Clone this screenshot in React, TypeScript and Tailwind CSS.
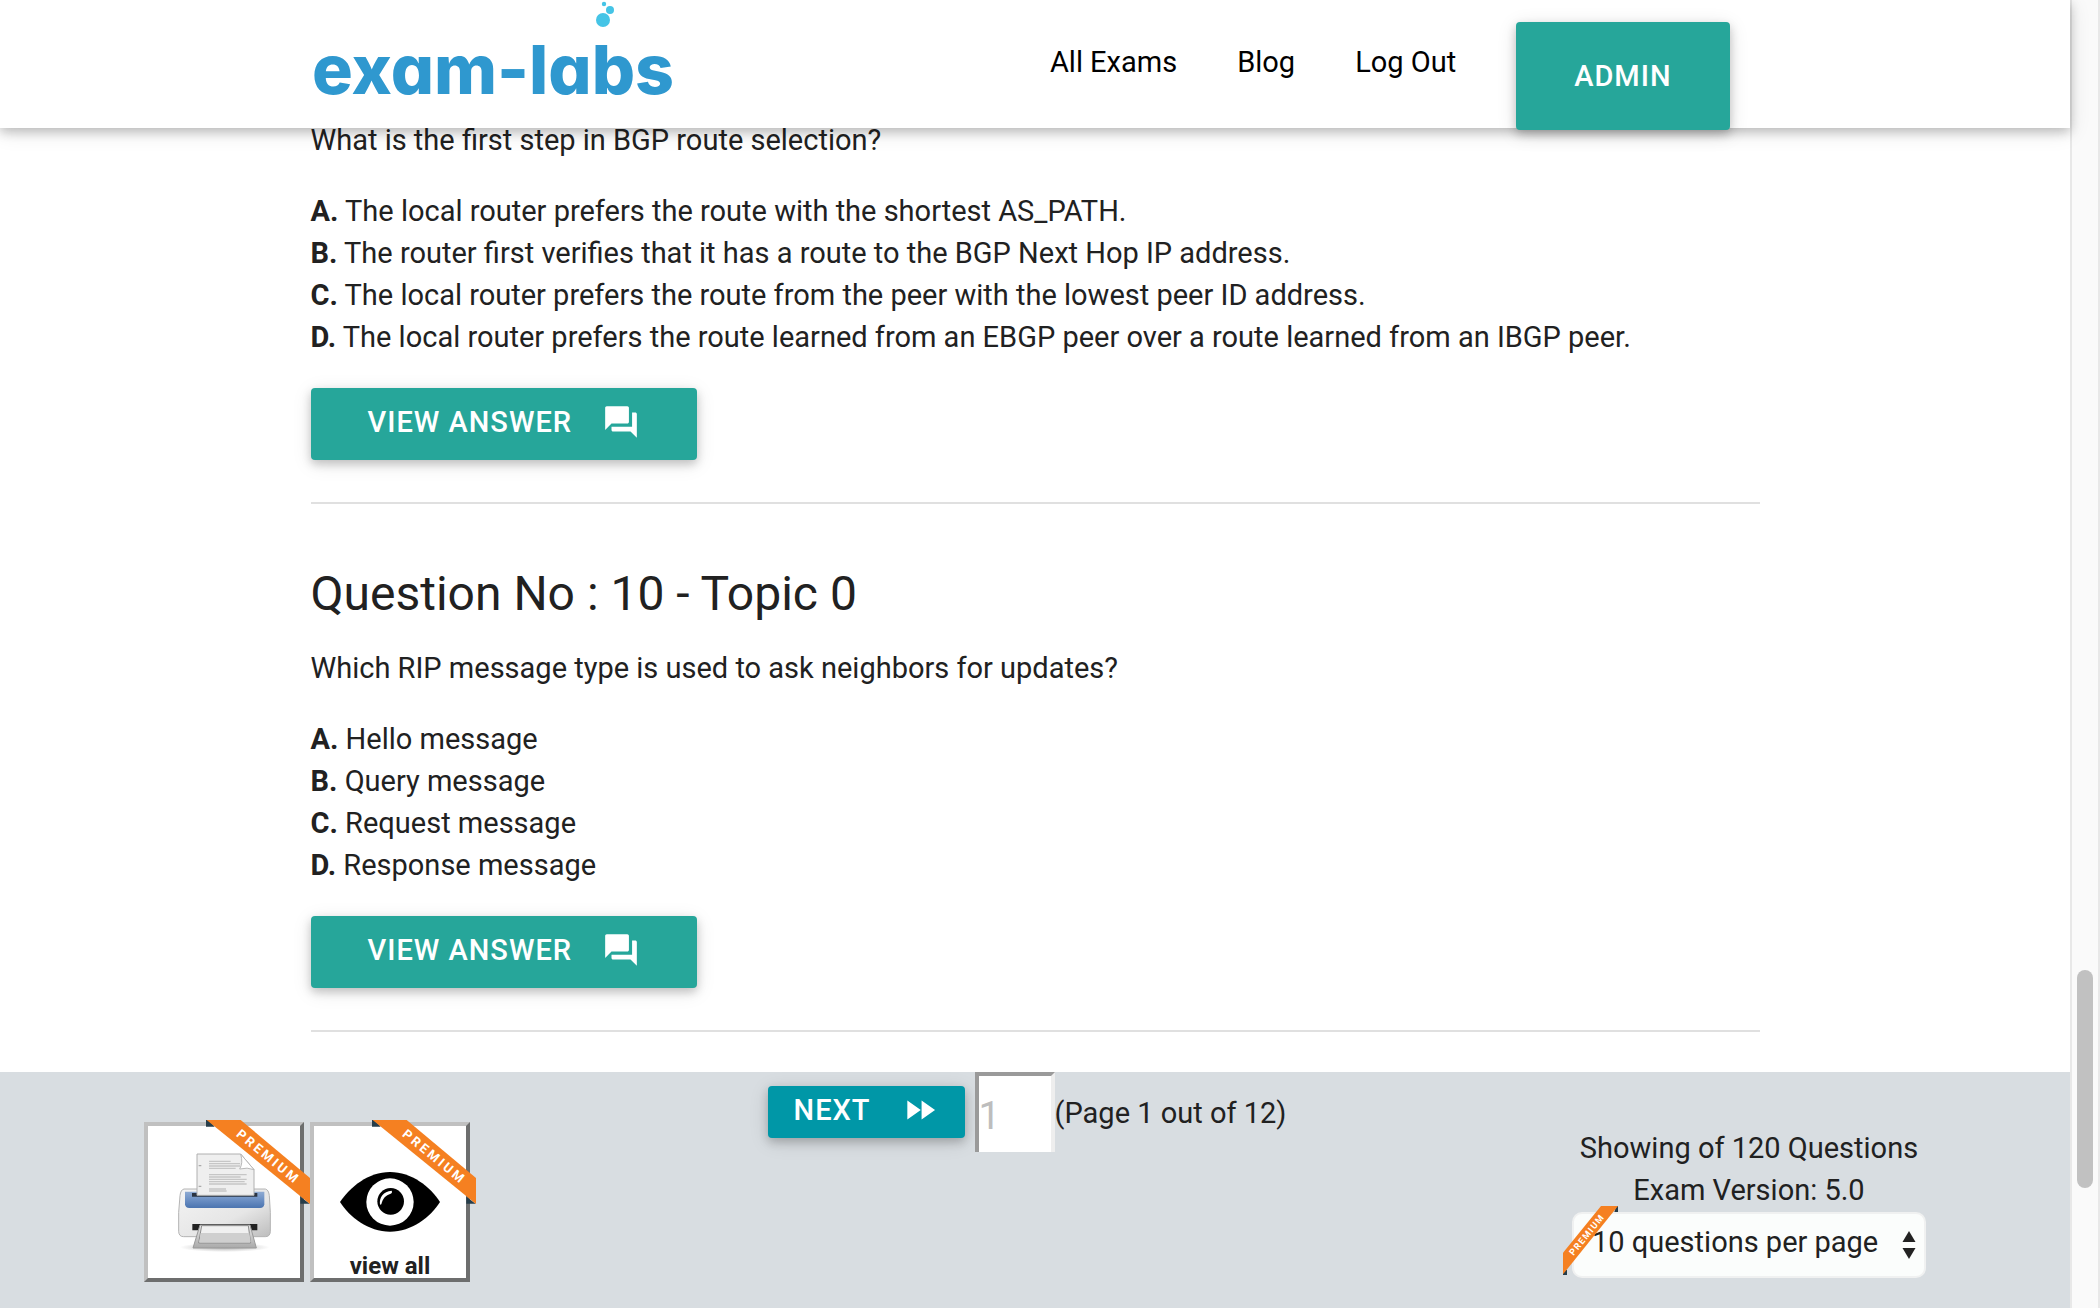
import { MdFastForward, MdForum } from "react-icons/md";

type Option = { letter: string; text: string };

const firstOptions: Option[] = [
  { letter: "A.", text: "The local router prefers the route with the shortest AS_PATH." },
  { letter: "B.", text: "The router first verifies that it has a route to the BGP Next Hop IP address." },
  { letter: "C.", text: "The local router prefers the route from the peer with the lowest peer ID address." },
  { letter: "D.", text: "The local router prefers the route learned from an EBGP peer over a route learned from an IBGP peer." },
];

const secondOptions: Option[] = [
  { letter: "A.", text: "Hello message" },
  { letter: "B.", text: "Query message" },
  { letter: "C.", text: "Request message" },
  { letter: "D.", text: "Response message" },
];

function Logo() {
  return (
    <a href="#home" aria-label="exam-labs" className="block h-[104px] w-[366px] shrink-0">
      <svg viewBox="0 0 366 104" className="h-full w-full overflow-visible">
        <text
          x="1"
          y="94"
          fill="#2f98cf"
          className="font-['Inter',sans-serif] text-[68px] font-extrabold [font-feature-settings:'cv11']"
        >
          exam-labs
        </text>
        <circle cx="292" cy="20" r="7" fill="#45c4e6" />
        <circle cx="299" cy="10" r="4" fill="#45c4e6" />
        <circle cx="293" cy="4" r="2.2" fill="#45c4e6" />
      </svg>
    </a>
  );
}

function Header() {
  return (
    <header className="relative z-10 h-32 shrink-0 bg-white shadow-[0_4px_10px_rgba(0,0,0,0.2),0_4px_20px_rgba(0,0,0,0.12)]">
      <div className="mx-auto flex w-[70%] items-start justify-between pr-[30px]">
        <Logo />
        <nav className="flex items-start gap-[60px] whitespace-nowrap text-black">
          <a href="#exams" className="mt-[41px]">All Exams</a>
          <a href="#blog" className="mt-[41px]">Blog</a>
          <a href="#logout" className="mt-[41px]">Log Out</a>
          <a
            href="#admin"
            className="mt-[22px] flex h-[108px] items-center rounded-[4px] bg-[#26a69a] px-[58px] font-medium tracking-[1px] text-white shadow-[0_4px_10px_rgba(0,0,0,0.2),0_4px_20px_rgba(0,0,0,0.12)]"
          >
            ADMIN
          </a>
        </nav>
      </div>
    </header>
  );
}

function Question({ title, prompt, options }: { title?: string; prompt: string; options: Option[] }) {
  return (
    <section className="border-b-2 border-[#e0e0e0] pb-[42px]">
      {title && <h2 className="mt-[63px] mb-[27px] text-[48px] leading-[53px]">{title}</h2>}
      <p>{prompt}</p>
      <ul className="mt-[29px] mb-[30px]">
        {options.map((o) => (
          <li key={o.letter}>
            <b className="font-bold">{o.letter}</b> {o.text}
          </li>
        ))}
      </ul>
      <button
        type="button"
        className="flex h-[72px] items-center gap-[30px] rounded-[4px] bg-[#26a69a] px-[57px] pb-1 font-medium tracking-[1px] text-white shadow-[0_4px_10px_rgba(0,0,0,0.2),0_4px_20px_rgba(0,0,0,0.1)]"
      >
        VIEW ANSWER
        <MdForum className="size-[38px]" />
      </button>
    </section>
  );
}

function Ribbon() {
  return (
    <svg viewBox="0 0 312 252" className="pointer-events-none absolute -top-[6px] -right-[10px] h-[84px] w-[104px]">
      <path d="M0 0V20H26L8 0Z" fill="#263d4a" />
      <path d="M283 230V251H311Z" fill="#263d4a" />
      <path d="M2 0H104L312 174V252Z" fill="#f58021" />
      <text
        transform="translate(187 110) rotate(39.5)"
        textAnchor="middle"
        dominantBaseline="central"
        fill="#fff"
        className="font-['Roboto',sans-serif] text-[39px] font-bold tracking-[8px]"
      >
        PREMIUM
      </text>
    </svg>
  );
}

function SmallRibbon() {
  return (
    <svg viewBox="0 0 165 207" className="pointer-events-none absolute -top-[6px] -left-[9px] h-[69px] w-[55px]">
      <path d="M165 0V18H154L160 0Z" fill="#263d4a" />
      <path d="M0 192H12V207H0Z" fill="#263d4a" />
      <path d="M114 0H165L0 205V140Z" fill="#f58021" />
      <text
        transform="translate(72 86) rotate(-51)"
        textAnchor="middle"
        dominantBaseline="central"
        fill="#fff"
        className="font-['Roboto',sans-serif] text-[27px] font-bold tracking-[4px]"
      >
        PREMIUM
      </text>
    </svg>
  );
}

function PrinterIcon() {
  return (
    <svg viewBox="172 156 279 306" className="h-[102px] w-[93px]">
      <defs>
        <linearGradient id="body" x1="0" y1="0" x2="1" y2="1">
          <stop offset="0" stopColor="#f4f4f4" />
          <stop offset="0.6" stopColor="#e6e6e6" />
          <stop offset="1" stopColor="#bdbdbd" />
        </linearGradient>
        <linearGradient id="blue" x1="0" y1="0" x2="0" y2="1">
          <stop offset="0" stopColor="#8fabd3" />
          <stop offset="0.5" stopColor="#6c90c4" />
          <stop offset="1" stopColor="#4b74b0" />
        </linearGradient>
        <linearGradient id="tray" x1="0" y1="0" x2="0" y2="1">
          <stop offset="0" stopColor="#e9e9e9" />
          <stop offset="1" stopColor="#a9a9a9" />
        </linearGradient>
        <radialGradient id="ground">
          <stop offset="0" stopColor="#777" stopOpacity="0.6" />
          <stop offset="1" stopColor="#777" stopOpacity="0" />
        </radialGradient>
      </defs>
      <ellipse cx="312" cy="445" rx="135" ry="14" fill="url(#ground)" />
      <path
        d="M190 270H434Q444 272 446 290L449 340V398Q448 413 434 413H189Q175 413 174 398V340L178 290Q180 272 190 270Z"
        fill="url(#body)"
        stroke="#b4b4b4"
        strokeWidth="3"
      />
      <path d="M193 278H431V316Q430 327 418 327H206Q194 327 193 316Z" fill="url(#blue)" />
      <path d="M214 282H410V293H214Z" fill="#2b3442" />
      <path d="M229 165H360L400 212V289H229Z" fill="#efefef" stroke="#b0b0b0" strokeWidth="3" />
      <path d="M360 165Q368 192 357 210Q380 204 400 212Z" fill="#fff" stroke="#b8b8b8" strokeWidth="3" />
      <path
        d="M265 187H330M265 194H358M265 201H358M265 208H345M265 227H378M265 234H360M265 241H378M265 248H372M265 255H378M265 270H316M265 276H318"
        stroke="#c6c6c6"
        strokeWidth="4"
      />
      <path d="M234 200H242M234 262H242" stroke="#aaa" strokeWidth="4" />
      <path d="M215 375H410V394H215Z" fill="#222" />
      <path d="M238 378H388L407 447H217Z" fill="url(#tray)" stroke="#999" strokeWidth="3" />
      <path d="M243 380H383L390 432H234Z" fill="#f0f0f0" stroke="#8b8b8b" strokeWidth="3" />
      <path d="M240 402H386L390 430H236Z" fill="#cfcfcf" />
    </svg>
  );
}

function EyeIcon() {
  return (
    <svg viewBox="0 0 300 180" className="h-[60px] w-[100px]">
      <path d="M0 90C30 45 85 0 150 0C215 0 272 45 300 90C272 135 215 179 150 179C85 179 28 135 0 90Z" fill="#000" />
      <circle cx="150" cy="90" r="71" fill="#fff" />
      <circle cx="152" cy="88" r="40" fill="#000" />
      <path d="M120 98C117 76 130 58 155 56C157 60 156 63 152 65C137 70 129 78 124 97Z" fill="#fff" />
    </svg>
  );
}

const tile =
  "relative size-40 border-4 border-t-[#c0c0c0] border-l-[#c0c0c0] border-r-[#6d6e6e] border-b-[#6d6e6e] bg-white";

function Footer() {
  return (
    <footer className="flex h-[236px] shrink-0 items-start justify-between bg-[#d8dde1] px-36 whitespace-nowrap">
      <div className="mt-[50px] flex gap-1.5">
        <button type="button" aria-label="Print" className={`${tile} flex items-center justify-center`}>
          <PrinterIcon />
          <Ribbon />
        </button>
        <button type="button" className={`${tile} flex flex-col items-center pt-[46px]`}>
          <EyeIcon />
          <span className="mt-[22px] text-[24px] leading-[24px] font-bold">view all</span>
          <Ribbon />
        </button>
      </div>

      <div className="flex items-start pl-3">
        <button
          type="button"
          className="mt-3.5 mr-2.5 flex h-[52px] items-center gap-[30px] rounded-[4px] bg-[#0097a7] px-[26px] pb-1 font-medium tracking-[1px] text-white shadow-[0_4px_10px_rgba(0,0,0,0.2),0_4px_20px_rgba(0,0,0,0.12)]"
        >
          NEXT
          <MdFastForward className="size-[38px]" />
        </button>
        <input
          aria-label="Page number"
          placeholder="1"
          className="h-20 w-20 border-4 border-b-0 border-t-[#9a9a9a] border-r-[#eeeeee] border-l-[#9a9a9a] bg-white pt-1 text-[39px] outline-none placeholder:text-[#bdbdbd]"
        />
        <span className="mt-5">(Page 1 out of 12)</span>
      </div>

      <div className="mt-[55px] flex flex-col items-center">
        <p>Showing of 120 Questions</p>
        <p>Exam Version: 5.0</p>
        <div className="relative mt-[1px]">
          <select
            aria-label="Questions per page"
            className="h-[66px] w-[354px] appearance-none rounded-[10px] border-2 border-[#f0f1f1] bg-[#fbfdfc] pr-10 pb-1.5 pl-[18px]"
          >
            <option>10 questions per page</option>
          </select>
          <svg viewBox="0 0 14 28" className="pointer-events-none absolute top-[19px] right-[10px] h-[28px] w-[14px]">
            <path d="M7 0L13.5 11H0.5Z" fill="#222" />
            <path d="M0.5 17H13.5L7 28Z" fill="#222" />
          </svg>
          <SmallRibbon />
        </div>
      </div>
    </footer>
  );
}

export default function App() {
  return (
    <div className="flex h-screen bg-white font-['Roboto',sans-serif] text-[29px] leading-[42px] text-[#212121]">
      <div className="flex min-w-0 flex-1 flex-col">
        <Header />
        <main className="flex min-h-0 flex-1 flex-col justify-end pb-10">
          <div className="mx-auto w-[70%]">
            <Question prompt="What is the first step in BGP route selection?" options={firstOptions} />
            <Question
              title="Question No : 10 - Topic 0"
              prompt="Which RIP message type is used to ask neighbors for updates?"
              options={secondOptions}
            />
          </div>
        </main>
        <Footer />
      </div>
      <div className="flex w-[30px] flex-col items-center border-x-2 border-[#e8e8e8] bg-[#fafafa]">
        <div className="grow-[970]" />
        <div className="h-[218px] w-4 rounded-full bg-[#c1c1c1]" />
        <div className="grow-[120]" />
      </div>
    </div>
  );
}
